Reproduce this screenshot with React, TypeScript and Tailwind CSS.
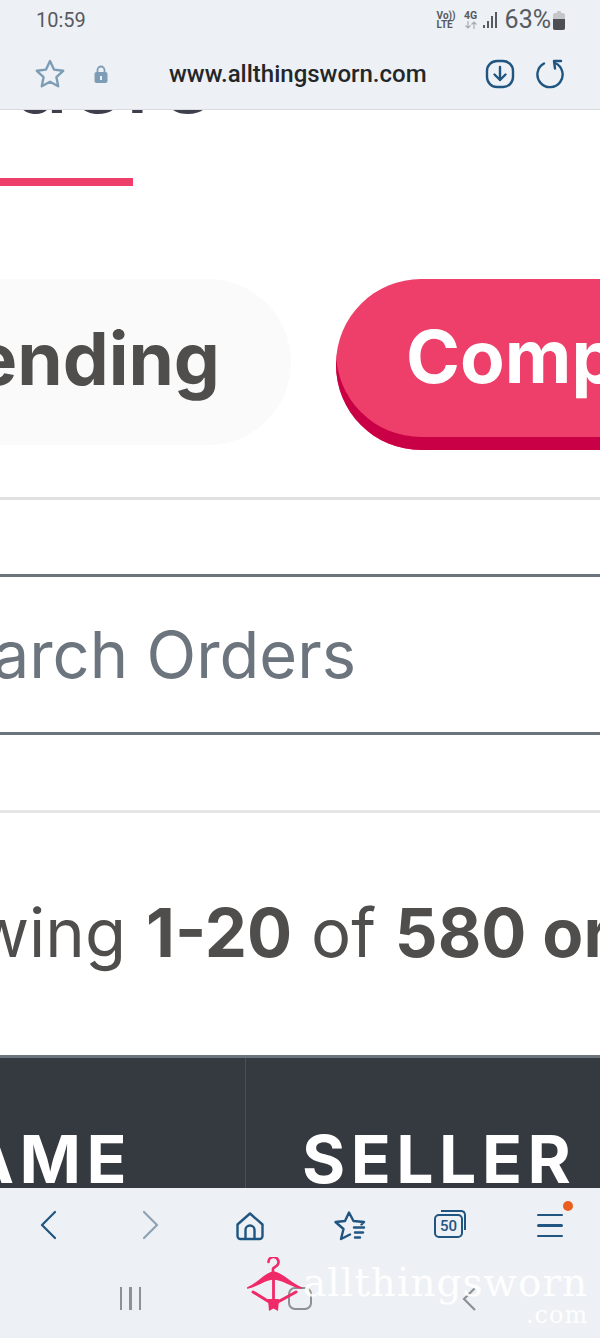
import React from "react";

const NAVY = "#1f5580";

const StatusBar: React.FC = () => (
  <div className="flex h-[40px] items-center justify-between pl-[36px] pr-[35px] text-[#575a5e]">
    <span className="text-[20px] font-['Roboto',sans-serif]">10:59</span>
    <div className="flex items-center">
      <div className="flex flex-col text-[10px] font-bold leading-[9px] font-['Roboto',sans-serif]">
        <span>Vo))</span>
        <span>LTE</span>
      </div>
      <div className="ml-[8px] flex flex-col items-center text-[10.5px] font-bold leading-[10px] font-['Roboto',sans-serif]">
        <span>4G</span>
        <svg width="14" height="8" viewBox="0 0 14 8" fill="none" stroke="#a9adb2" strokeWidth="1.2">
          <path d="M4 0v7M1.5 4.5 4 7l2.5-2.5M10 8V1M7.5 3.5 10 1l2.5 2.5" />
        </svg>
      </div>
      <svg className="ml-[5px]" width="15" height="18" viewBox="0 0 15 18" fill="#575a5e">
        <rect x="0" y="14" width="2" height="3" />
        <rect x="4" y="10" width="2" height="7" />
        <rect x="8" y="5" width="2" height="12" />
        <rect x="12" y="1" width="2" height="16" />
      </svg>
      <span className="ml-[7px] text-[25px] leading-[28px] font-['Roboto',sans-serif]">63%</span>
      <svg className="ml-[2px]" width="12" height="19" viewBox="0 0 12 19">
        <path d="M4 0h4v2h2a2 2 0 0 1 2 2v13a2 2 0 0 1-2 2H2a2 2 0 0 1-2-2V4a2 2 0 0 1 2-2h2z" fill="#c4c6c9" />
        <path d="M0 8h12v9a2 2 0 0 1-2 2H2a2 2 0 0 1-2-2z" fill="#4d4f52" />
      </svg>
    </div>
  </div>
);

const AddressBar: React.FC = () => (
  <div className="flex h-[70px] items-start border-b border-[#d9dbde] pt-[18px]">
    <svg className="ml-[34px]" width="32" height="32" viewBox="0 0 32 32" fill="none" stroke="#7d9db6" strokeWidth="2.4" strokeLinejoin="round">
      <path d="M16 3l4 8.6 9.2 1.2-6.8 6.3 1.8 9.2L16 23.8l-8.2 4.5 1.8-9.2-6.8-6.3L12 11.6z" />
    </svg>
    <svg className="ml-[28px] mt-[7px]" width="14" height="18" viewBox="0 0 14 18">
      <path d="M3.5 8V5a3.5 3.5 0 0 1 7 0v3" fill="none" stroke="#7d9db6" strokeWidth="1.8" />
      <rect x="0.5" y="7" width="13" height="11" rx="2" fill="#7d9db6" />
      <rect x="6" y="11" width="2" height="4" fill="#edf0f4" />
    </svg>
    <span className="ml-[61px] mt-[1px] w-[256px] whitespace-nowrap text-[24px] leading-[30px] font-medium text-[#24272a] font-['Roboto',sans-serif]">
      www.allthingsworn.com
    </span>
    <svg className="ml-[60px] mt-[1px]" width="30" height="30" viewBox="0 0 30 30" fill="none" stroke={NAVY} strokeWidth="2.4" strokeLinecap="round" strokeLinejoin="round">
      <rect x="2" y="2" width="26" height="26" rx="10" />
      <path d="M15 8v13M9.5 15.5 15 21l5.5-5.5" />
    </svg>
    <svg className="ml-[19px] mt-[1px]" width="30" height="30" viewBox="0 0 30 30" fill="none" stroke={NAVY} strokeWidth="2.4" strokeLinecap="round" strokeLinejoin="round">
      <path d="M10 4.5A12.6 12.6 0 1 0 21 4" />
      <path d="M27 2h-7l1 7.5" />
    </svg>
  </div>
);

const BottomNav: React.FC = () => (
  <div className="relative h-[150px] bg-[#edf0f4]">
    <div className="grid h-[68px] grid-cols-6">
      <div className="flex justify-center pt-[22px] pr-[4px]">
        <svg width="16" height="30" viewBox="0 0 16 30" fill="none" stroke={NAVY} strokeWidth="2.2" strokeLinecap="round" strokeLinejoin="round">
          <path d="M15 2 2 15l13 13" />
        </svg>
      </div>
      <div className="flex justify-center pt-[22px] pl-[2px]">
        <svg width="16" height="30" viewBox="0 0 16 30" fill="none" stroke="#8da3b5" strokeWidth="2.2" strokeLinecap="round" strokeLinejoin="round">
          <path d="m1 2 13 13L1 28" />
        </svg>
      </div>
      <div className="flex justify-center pt-[23px]">
        <svg width="30" height="30" viewBox="0 0 30 30" fill="none" stroke={NAVY} strokeWidth="2.4" strokeLinejoin="round">
          <path d="M2.5 13.5 15 2.5l12.5 11V25a3 3 0 0 1-3 3h-19a3 3 0 0 1-3-3z" />
          <path d="M10.5 28V19a4.5 4.5 0 0 1 9 0v9" />
        </svg>
      </div>
      <div className="flex justify-center pt-[23px]">
        <svg width="32" height="30" viewBox="0 0 32 30" fill="none" stroke={NAVY} strokeWidth="2.4" strokeLinecap="round" strokeLinejoin="round">
          <path d="M16 23.5 7 28l2.5-10L1.5 11l9.5-1L15 1.5l4.5 8.5 10.5 1-2.5 2.5" />
          <path d="M20 16.5h10M21 21.5h8M21 26.5h5" />
        </svg>
      </div>
      <div className="flex justify-center pt-[22px]">
        <div className="relative h-[28px] w-[32px]">
          <div className="absolute left-[7px] top-0 h-[20px] w-[25px] rounded-tr-[5px] border-t-[2.4px] border-r-[2.4px] border-[#1f5580]" />
          <div className="absolute bottom-0 left-0 flex h-[24px] w-[29px] items-center justify-center rounded-[5px] border-[2.4px] border-[#1f5580] bg-[#edf0f4] text-[15px] leading-none font-medium text-[#1f5580] font-['Roboto',sans-serif]">
            50
          </div>
        </div>
      </div>
      <div className="flex justify-center pt-[26px]">
        <div className="flex h-[23px] w-[26px] flex-col justify-between">
          <div className="h-[2.4px] rounded bg-[#1f5580]" />
          <div className="h-[2.4px] rounded bg-[#1f5580]" />
          <div className="h-[2.4px] rounded bg-[#1f5580]" />
        </div>
      </div>
    </div>
    {/* Notification dot */}
    <div className="absolute left-[563px] top-[13px] h-[10px] w-[10px] rounded-full bg-[#ea5f1e]" />

    {/* Gesture bar */}
    <div className="grid grid-cols-3 px-[46px] pt-[31px]">
      <div className="flex justify-center gap-[7px]">
        <div className="h-[23px] w-[2.5px] bg-[#8e9193]" />
        <div className="h-[23px] w-[2.5px] bg-[#8e9193]" />
        <div className="h-[23px] w-[2.5px] bg-[#8e9193]" />
      </div>
      <div className="flex justify-center">
        <div className="h-[23px] w-[24px] rounded-[7px] border-[2.5px] border-[#8e9193]" />
      </div>
      <div className="flex justify-center">
        <svg width="14" height="24" viewBox="0 0 14 24" fill="none" stroke="#8e9193" strokeWidth="2.2">
          <path d="M13 1 2 12l11 11" />
        </svg>
      </div>
    </div>

    {/* Site watermark logo over the browser chrome */}
    <div className="absolute left-[247px] top-[69px] flex items-start">
      <svg width="56" height="56" viewBox="0 0 56 56" fill="none" stroke="#f02a68" strokeLinecap="round">
        <path d="M21.5 5a5 5 0 1 1 7 4.6L26 11.5V16" strokeWidth="2.6" strokeLinejoin="round" />
        <path d="M0.5 31C11 27 18 16 26.500 15c9 1 17 12 28 16-11-2-19-9-28-9S11 29 0.500 31z" fill="#f02a68" strokeWidth="1.500" strokeLinejoin="round" />
        <path d="M26.500 20v26" strokeWidth="2.800" />
        <path d="M6 35 24 46M49 35 29 46" strokeWidth="3" />
        <path d="M21 42h11l-1 12-4.500-2.500L22 54z" fill="#f02a68" stroke="none" />
      </svg>
      <div className="mt-[5px] flex flex-col items-end">
        <span className="text-[39px] leading-[42px] tracking-[1px] text-white/90 font-['DejaVu_Serif',serif]">allthingsworn</span>
        <span className="-mt-[1px] text-[24px] leading-[24px] tracking-[1px] text-white/90 font-['DejaVu_Serif',serif]">.com</span>
      </div>
    </div>
  </div>
);

const App: React.FC = () => {
  return (
    <div className="flex h-[1338px] w-[600px] flex-col overflow-hidden bg-white font-['Inter',sans-serif]">
      <header className="h-[110px] shrink-0 bg-[#edf0f4]">
        <StatusBar />
        <AddressBar />
      </header>

      <main className="min-h-0 flex-1 overflow-hidden">
        {/* Page title, scrolled almost out of view */}
        <div className="-mt-[80px] flex w-[214px] justify-end">
          <h1 className="whitespace-nowrap text-[96px] leading-[96px] font-medium text-[#3d3f4d]">Orders</h1>
        </div>
        <div className="mt-[52px] h-[8px] w-[133px] bg-[#ee3e6a]" />

        {/* Status tabs */}
        <div className="mt-[93px] flex gap-[45px]">
          <div className="flex h-[166px] w-[291px] shrink-0 items-center justify-end rounded-r-[83px] bg-[#fafafa] pb-[6px] pr-[71px]">
            <span className="whitespace-nowrap text-[73px] font-bold text-[#504e4c]">Pending</span>
          </div>
          <div className="flex h-[171px] w-[400px] shrink-0 items-center rounded-l-[85px] bg-[#ee3e6a] pb-[15px] pl-[70px] shadow-[inset_0_-13px_0_#c90045]">
            <span className="whitespace-nowrap text-[73px] font-bold text-white">Completed</span>
          </div>
        </div>

        <div className="mt-[47px] h-[3px] bg-[#e0e0e0]" />

        {/* Search input */}
        <div className="mt-[74px] flex h-[161px] items-center border-y-[3px] border-[#6c757d]">
          <div className="flex w-[356px] justify-end">
            <span className="whitespace-nowrap text-[65px] text-[#6c757d]">Search Orders</span>
          </div>
        </div>

        <div className="mt-[75px] h-[3px] bg-[#e6e6e6]" />

        {/* Result count */}
        <div className="mt-[80px] flex h-[80px] items-center">
          <div className="flex w-[126px] shrink-0 justify-end">
            <span className="whitespace-nowrap text-[67px] text-[#504e4c]">Showing</span>
          </div>
          <span className="ml-[20px] whitespace-nowrap text-[67px] text-[#504e4c]">
            <b className="font-bold">1-20</b> of <b className="font-bold">580 orders</b>
          </span>
        </div>

        {/* Table head */}
        <div className="mt-[82px] flex h-[133px] border-t-[3px] border-[#6c757d] bg-[#353a41]">
          <div className="flex w-[246px] shrink-0 justify-end border-r border-[#4b5057] pr-[113px]">
            <span className="mt-[68px] whitespace-nowrap text-[66px] leading-[66px] font-bold tracking-[5.5px] text-white">NAME</span>
          </div>
          <span className="ml-[56px] mt-[68px] whitespace-nowrap text-[66px] leading-[66px] font-bold tracking-[5.5px] text-white">SELLER</span>
        </div>
      </main>

      <BottomNav />
    </div>
  );
};

export default App;
